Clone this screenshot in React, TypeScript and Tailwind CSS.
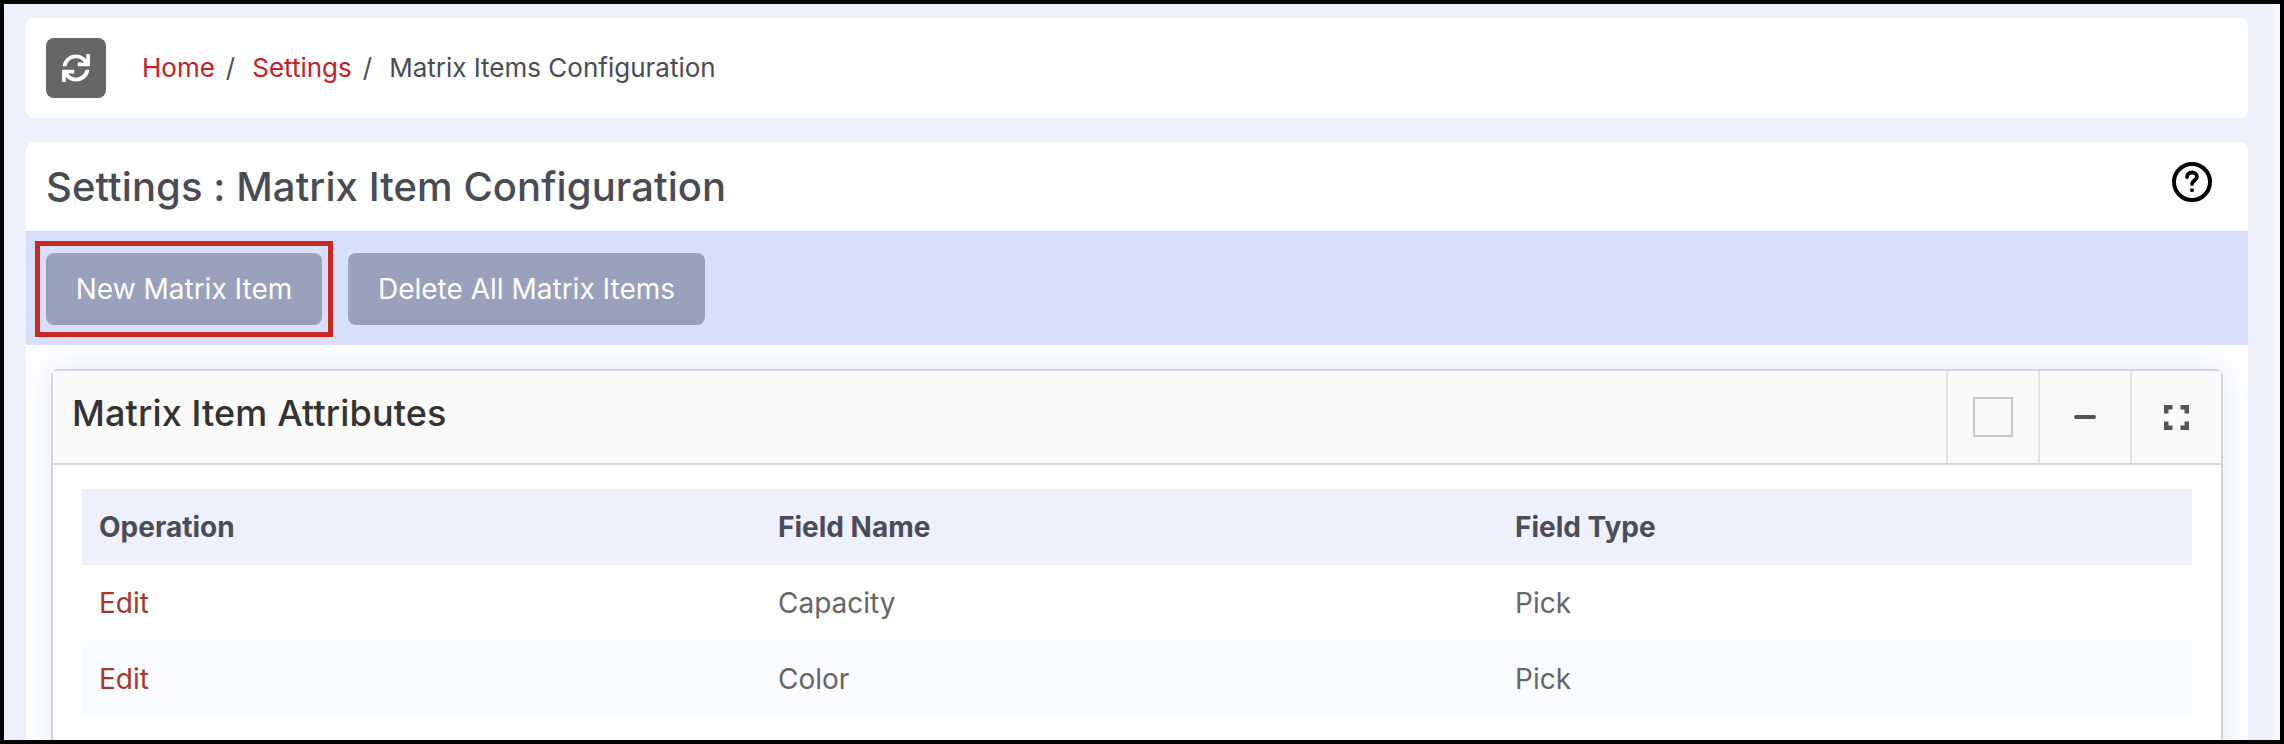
import { FaSync } from "react-icons/fa";

const rows = [
  { name: "Capacity", type: "Pick", striped: false },
  { name: "Color", type: "Pick", striped: true },
];

function HelpIcon() {
  return (
    <svg width="40" height="40" viewBox="0 0 40 40" fill="none" stroke="#000" strokeWidth="4">
      <circle cx="20" cy="20" r="18" />
      <path d="M15 15c0-2.800 2.200-4.500 5-4.500s5 1.700 5 4.300c0 3.500-5 3.700-5 7.200" strokeWidth="3.800" strokeLinecap="round" />
      <circle cx="20" cy="28.300" r="1.300" fill="#000" strokeWidth="1.500" />
    </svg>
  );
}

function ExpandIcon() {
  return (
    <svg width="25" height="25" viewBox="0 0 25 25" fill="none" stroke="#555" strokeWidth="4.500">
      <path d="M2.200 8.500V2.200h6.300M16.500 2.200h6.300v6.300M22.800 16.500v6.300h-6.300M8.500 22.800H2.200v-6.300" />
    </svg>
  );
}

export default function App() {
  return (
    <div className="flex h-[744px] w-[2284px] overflow-hidden border-4 border-black bg-[#eef1fc] font-['Inter',sans-serif] [font-feature-settings:'calt'_0]">
      <div className="flex-1 pl-[22px] pr-[25px] pt-[14px]">
        {/* Breadcrumb */}
        <div className="flex h-[100px] items-center rounded-lg bg-white pl-[20px]">
          <button className="flex h-[60px] w-[60px] items-center justify-center rounded-lg bg-[#666666] text-white">
            <FaSync size={28} />
          </button>
          <nav className="ml-[36px] flex items-center pb-[2px] text-[26px] text-[#4a4c55]">
            <a className="text-[#c42127]">Home</a>
            <span className="ml-[11px]">/</span>
            <a className="ml-[17px] text-[#c42127]">Settings</a>
            <span className="ml-[11px]">/</span>
            <span className="ml-[17px]">Matrix Items Configuration</span>
          </nav>
        </div>

        <div className="mt-[24px] rounded-t-lg bg-white">
          <div className="flex h-[89px] items-start justify-between pl-[20px] pr-[36px]">
            <h1 className="mt-[20px] text-[40px] font-medium leading-[50px] tracking-[0.08px] text-[#4a4c54]">Settings : Matrix Item Configuration</h1>
            <div className="mt-[20px]">
              <HelpIcon />
            </div>
          </div>

          {/* Toolbar */}
          <div className="flex h-[114px] items-center gap-[26px] border-t border-[#d4d9ee] bg-[#d8dffa] pl-[20px]">
            <div className="relative">
              <button className="h-[72px] w-[276px] rounded-lg bg-[#99a1bc] text-[28px] text-white">New Matrix Item</button>
              <div className="absolute -inset-x-[11px] -inset-y-[12px] border-[5px] border-[#c8281e]" />
            </div>
            <button className="h-[72px] w-[357px] rounded-lg bg-[#99a1bc] text-[28px] text-white">Delete All Matrix Items</button>
          </div>

          {/* Panel */}
          <div className="h-[395px] rounded-t-lg bg-white px-[25px] pt-[24px]">
            <div className="h-[400px] rounded-t-lg border-2 border-[#d3d5de] bg-white shadow-[0_0_30px_rgba(90,100,190,0.16)]">
              <div className="flex h-[94px] items-stretch justify-between border-b-2 border-[#d8d8dc] bg-[#fafafa]">
                <h2 className="ml-[19px] mt-[17px] text-[36px] font-medium leading-[50px] tracking-[0.13px] text-[#333333]">Matrix Item Attributes</h2>
                <div className="flex">
                  <div className="flex w-[92px] items-center justify-center border-l-2 border-[#e2e2e4]">
                    <div className="h-[40px] w-[40px] border-2 border-[#c9c9c9]" />
                  </div>
                  <div className="flex w-[92px] items-center justify-center border-l-2 border-[#e2e2e4]">
                    <div className="h-[4px] w-[22px] rounded-sm bg-[#555555]" />
                  </div>
                  <div className="flex w-[91px] items-center justify-center border-l-2 border-[#e2e2e4]">
                    <ExpandIcon />
                  </div>
                </div>
              </div>

              <div className="px-[29px] pt-[24px]">
                <div className="grid h-[76px] grid-cols-[679px_737px_1fr] items-center bg-[#eef1fc] pl-[17px] text-[28px] font-bold text-[#4a4c58]">
                  <span>Operation</span>
                  <span>Field Name</span>
                  <span>Field Type</span>
                </div>
                {rows.map((row) => (
                  <div
                    key={row.name}
                    className={`grid h-[76px] grid-cols-[679px_737px_1fr] items-center pl-[17px] text-[28px] text-[#666666] ${
                      row.striped ? "bg-[#fbfcff]" : "bg-white"
                    }`}
                  >
                    <a className="text-[#a5382c]">Edit</a>
                    <span>{row.name}</span>
                    <span>{row.type}</span>
                  </div>
                ))}
              </div>
            </div>
          </div>
        </div>
      </div>
      <div className="w-[7px] bg-[#f6f7fc]" />
    </div>
  );
}
